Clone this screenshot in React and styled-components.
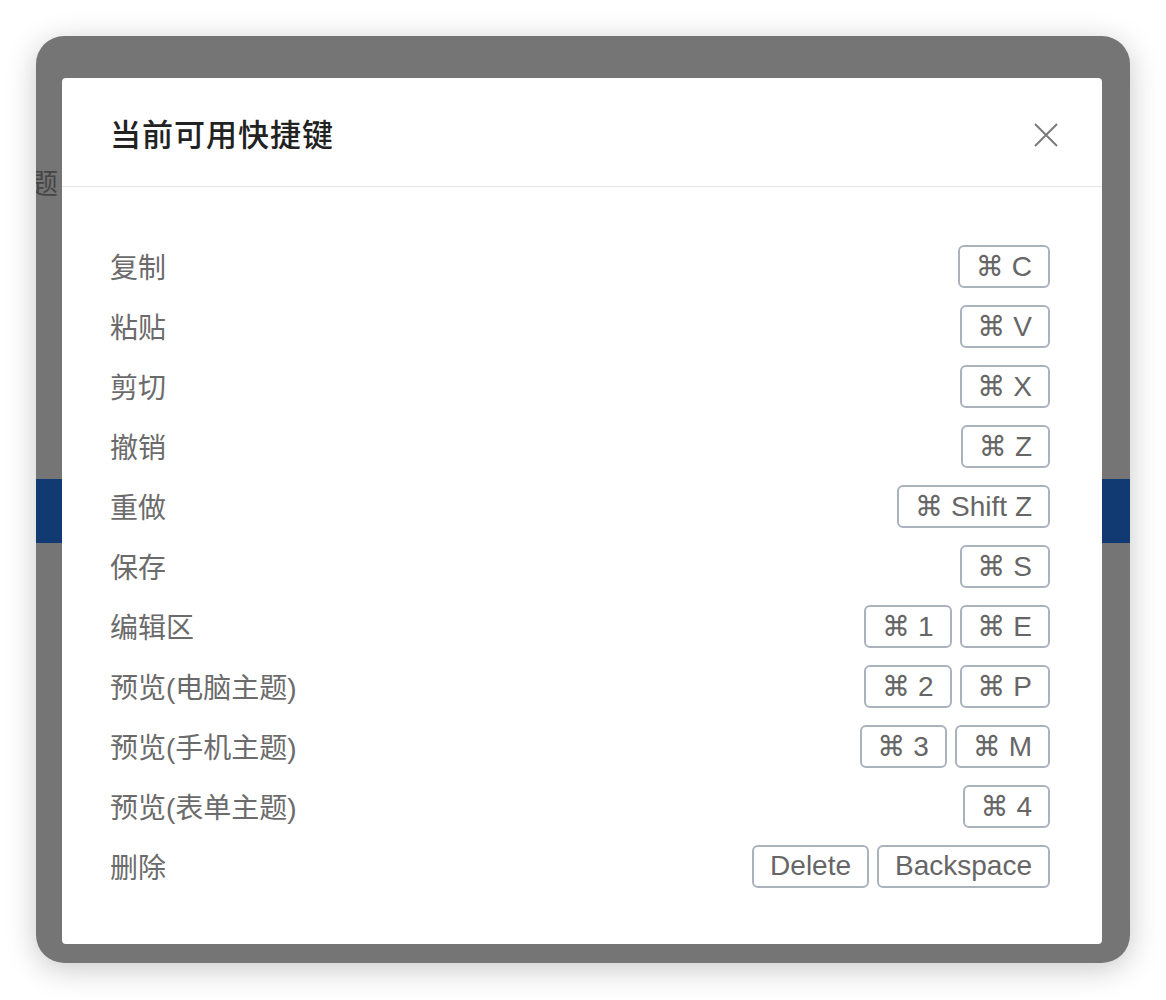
import React from 'react';
import styled, { createGlobalStyle } from 'styled-components';

const shortcuts = [
  { label: '复制', keys: ['⌘ C'] },
  { label: '粘贴', keys: ['⌘ V'] },
  { label: '剪切', keys: ['⌘ X'] },
  { label: '撤销', keys: ['⌘ Z'] },
  { label: '重做', keys: ['⌘ Shift Z'] },
  { label: '保存', keys: ['⌘ S'] },
  { label: '编辑区', keys: ['⌘ 1', '⌘ E'] },
  { label: '预览(电脑主题)', keys: ['⌘ 2', '⌘ P'] },
  { label: '预览(手机主题)', keys: ['⌘ 3', '⌘ M'] },
  { label: '预览(表单主题)', keys: ['⌘ 4'] },
  { label: '删除', keys: ['Delete', 'Backspace'] },
];

function App() {
  return (
    <>
      <GlobalStyle />
      <Window>
        <PageText>主题</PageText>
        <BlueBand />
        <Overlay />
        <Modal>
          <Header>
            <Title>当前可用快捷键</Title>
            <CloseButton aria-label="close">
              <svg width="24" height="24" viewBox="0 0 24 24">
                <path d="M1 1 L23 23 M23 1 L1 23" stroke="#7a7a7a" strokeWidth="2" fill="none" />
              </svg>
            </CloseButton>
          </Header>
          <Body>
            {shortcuts.map((s) => (
              <Row key={s.label}>
                <Label>{s.label}</Label>
                <Keys>
                  {s.keys.map((k) => (
                    <Key key={k}>{k}</Key>
                  ))}
                </Keys>
              </Row>
            ))}
          </Body>
        </Modal>
      </Window>
    </>
  );
}

export default App

const GlobalStyle = createGlobalStyle`
  html, body {
    margin: 0;
    padding: 0;
    background: #ffffff;
  }
  body {
    font-family: "Liberation Sans", "Noto Sans CJK SC", sans-serif;
  }
  #root {
    padding: 36px;
  }
`

const Window = styled.div`
  position: relative;
  width: 1094px;
  height: 927px;
  border-radius: 28px;
  overflow: hidden;
  background: #ffffff;
  box-shadow: 0 6px 30px rgba(0, 0, 0, 0.22);
`

const PageText = styled.div`
  margin: 126px 0 0 -34px;
  font-size: 28px;
  line-height: 40px;
  color: #999;
  font-family: "Noto Sans CJK SC", sans-serif;
`

const BlueBand = styled.div`
  margin-top: 277px;
  height: 64px;
  background: #257ef8;
`

const Overlay = styled.div`
  position: absolute;
  inset: 0;
  background: rgba(0, 0, 0, 0.541);
`

const Modal = styled.div`
  position: absolute;
  left: 26px;
  top: 42px;
  width: 1040px;
  background: #ffffff;
  border-radius: 4px;
`

const Header = styled.div`
  height: 108px;
  display: flex;
  align-items: center;
  justify-content: space-between;
  padding: 0 44px 0 48px;
  border-bottom: 1px solid #e6e6e6;
`

const Title = styled.h2`
  margin: 0;
  font-size: 31px;
  font-weight: 500;
  color: #222;
  font-family: "Noto Sans CJK SC", sans-serif;
  letter-spacing: 1px;
`

const CloseButton = styled.button`
  border: 0;
  background: none;
  padding: 0;
  margin-top: 6px;
  width: 24px;
  height: 24px;
  cursor: pointer;
  display: flex;
`

const Body = styled.div`
  padding: 49px 52px 48px 48px;
`

const Row = styled.div`
  height: 60px;
  display: flex;
  align-items: center;
  justify-content: space-between;
`

const Label = styled.span`
  font-size: 28px;
  color: #6b6b6b;
`

const Keys = styled.div`
  display: flex;
  gap: 8px;
`

const Key = styled.span`
  height: 43px;
  box-sizing: border-box;
  display: inline-flex;
  align-items: center;
  padding: 0 16px;
  border: 2px solid #aab2be;
  border-radius: 6px;
  font-family: "Liberation Sans", "DejaVu Sans", sans-serif;
  font-size: 28px;
  color: #666;
  white-space: pre;
`
